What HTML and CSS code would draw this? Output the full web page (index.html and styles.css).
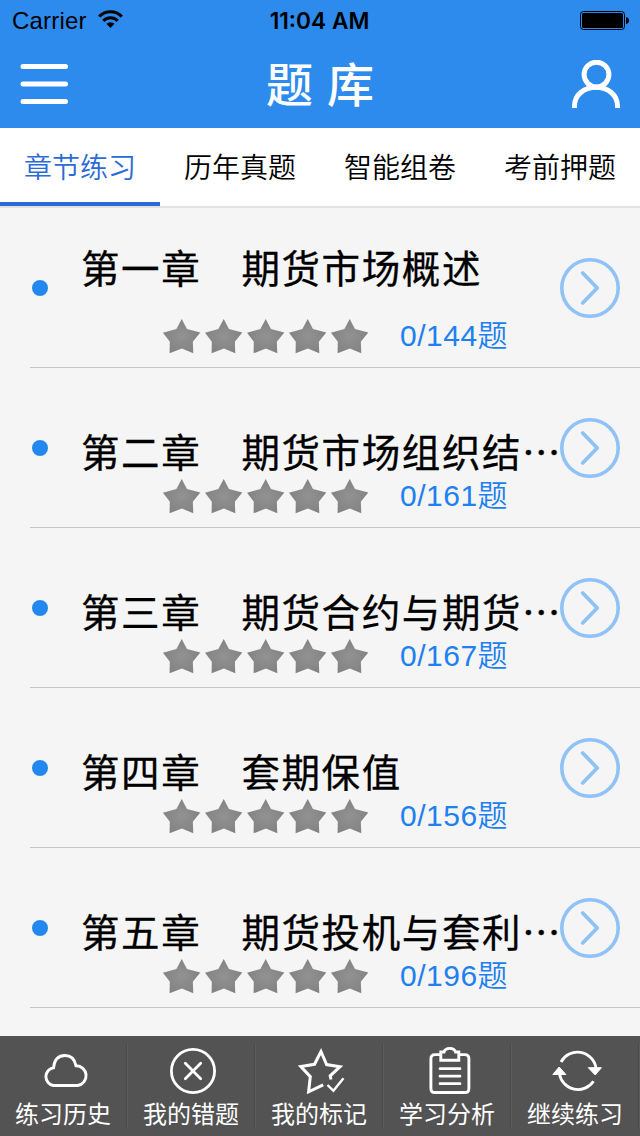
FILE: index.html
```html
<!DOCTYPE html>
<html lang="zh-CN">
<head>
<meta charset="utf-8">
<title>题库</title>
<link rel="stylesheet" href="styles.css">
</head>
<body>
<svg class="defs" width="0" height="0">
  <defs>
    <radialGradient id="grey"><stop offset="0" stop-color="#929292"/><stop offset="1" stop-color="#838383"/></radialGradient>
    <path id="star" d="M18.7 0L24 10L37.3 13.5L29.8 22.7L30.3 34.3L18.9 29.4L6.6 34.3L6.8 22.7L0 13.8L13.4 10Z"/>
    <g id="stars" fill="url(#grey)">
      <use href="#star" x="0"/><use href="#star" x="42"/><use href="#star" x="84"/><use href="#star" x="126"/><use href="#star" x="168"/>
    </g>
    <g id="go" fill="none" stroke="#8fc2f6">
      <circle cx="30" cy="30" r="28.2" stroke-width="3.6"/>
      <path d="M22.7 15L37.2 30L22.7 45" stroke-width="3.8" stroke-linecap="round" stroke-linejoin="round"/>
    </g>
  </defs>
</svg>
<div class="app">
  <header class="top">
    <div class="status">
      <div class="carrier"><span>Carrier</span>
        <svg width="25" height="19" viewBox="0 0 26 20" fill="none" stroke="#000" stroke-width="3.2">
          <path d="M1.1 7A16.5 16.5 0 0 1 24.9 7"/><path d="M5.4 11.4A10.7 10.7 0 0 1 20.6 11.4"/>
          <path d="M13 19L8.7 14.6A6.2 6.2 0 0 1 17.3 14.6Z" fill="#000" stroke="none"/>
        </svg>
      </div>
      <div class="clock">11:04 AM</div>
      <svg class="battery" width="50" height="20" viewBox="0 0 50 20">
        <rect x=".5" y=".5" width="44" height="18" rx="3" fill="none" stroke="#000"/>
        <rect x="2" y="2" width="41" height="15" rx="1.5"/><path d="M46 6Q49 6.5 49 9.5T46 13Z"/>
      </svg>
    </div>
    <div class="nav">
      <svg width="48" height="48" viewBox="0 0 48 48" stroke="#fff" stroke-width="5" stroke-linecap="round"><path d="M3 6.5H45.5M3 24H45.5M3 41.5H45.5"/></svg>
      <h1>题 库</h1>
      <svg width="48" height="48" viewBox="0 0 48 48" fill="none" stroke="#fff" stroke-width="5"><circle cx="24.5" cy="14.6" r="12.4"/><path d="M2.5 48V46C2.5 35 12 27.3 24 27.3S45.5 35 45.5 46V48"/></svg>
    </div>
  </header>
  <nav class="tabs">
    <a class="tab active">章节练习</a><a class="tab">历年真题</a><a class="tab">智能组卷</a><a class="tab">考前押题</a>
  </nav>
  <ul class="list">
    <li class="row first"><i class="dot"></i><div class="body"><div class="title">第一章　期货市场概述</div><div class="meta"><svg width="206" height="35"><use href="#stars"/></svg><span>0/144题</span></div></div><svg class="go" width="60" height="60"><use href="#go"/></svg></li>
    <li class="row"><i class="dot"></i><div class="body"><div class="title">第二章　期货市场组织结…</div><div class="meta"><svg width="206" height="35"><use href="#stars"/></svg><span>0/161题</span></div></div><svg class="go" width="60" height="60"><use href="#go"/></svg></li>
    <li class="row"><i class="dot"></i><div class="body"><div class="title">第三章　期货合约与期货…</div><div class="meta"><svg width="206" height="35"><use href="#stars"/></svg><span>0/167题</span></div></div><svg class="go" width="60" height="60"><use href="#go"/></svg></li>
    <li class="row"><i class="dot"></i><div class="body"><div class="title">第四章　套期保值</div><div class="meta"><svg width="206" height="35"><use href="#stars"/></svg><span>0/156题</span></div></div><svg class="go" width="60" height="60"><use href="#go"/></svg></li>
    <li class="row"><i class="dot"></i><div class="body"><div class="title">第五章　期货投机与套利…</div><div class="meta"><svg width="206" height="35"><use href="#stars"/></svg><span>0/196题</span></div></div><svg class="go" width="60" height="60"><use href="#go"/></svg></li>
  </ul>
  <footer class="bar">
    <a class="item"><svg width="52" height="50" viewBox="0 0 52 50"><path d="M14.5 39.5A9 9 0 0 1 14.6 21.7Q15.7 9.5 26 9.5Q35 9.5 37 19.8A9.9 9.9 0 0 1 38.6 39.5Z" stroke-width="2.9"/></svg><span>练习历史</span></a>
    <a class="item"><svg width="52" height="50" viewBox="0 0 52 50"><circle cx="26" cy="25" r="21.6" stroke-width="2.8"/><path d="M18.3 17.3L33.7 32.7M33.7 17.3L18.3 32.7" stroke-width="2.8" stroke-linecap="round"/></svg><span>我的错题</span></a>
    <a class="item"><svg width="52" height="50" viewBox="0 0 52 50"><path d="M36 33.5L35.2 29.8L45 20.7L31.6 18.6L26 5.5L19.5 18.3L5.8 20.6L15.3 30.6L13.6 45.8L28.2 38.8" stroke-width="3"/><path d="M32.5 39L38.4 44.8L48.5 32.2" stroke-width="2.4"/></svg><span>我的标记</span></a>
    <a class="item"><svg width="52" height="50" viewBox="0 0 52 50"><path d="M17 8.6H12Q7.9 8.6 7.9 12.7V42.4Q7.9 46.5 12 46.5H41.8Q45.9 46.5 45.9 42.4V12.7Q45.9 8.6 41.8 8.6H36.5" stroke-width="2.9"/><path d="M17.8 14.2V6H21Q22 2.4 26.8 2.4T32.5 6H35.8V14.2Z" stroke-width="2.9"/><path d="M17 22.7H37M17 30.2H37M17 37.7H37" stroke-width="2.7" stroke-linecap="round"/></svg><span>学习分析</span></a>
    <a class="item"><svg width="52" height="50" viewBox="0 0 52 50"><path d="M10 16A18.7 18.7 0 0 1 45 22M42.5 35.2A18.7 18.7 0 0 1 8.5 28" stroke-width="2.8"/><path d="M37.3 21.7H50.4L44.2 29ZM1.8 28.5H14.9L8.2 21Z" fill="#fff" stroke-width="1" stroke-linejoin="round"/></svg><span>继续练习</span></a>
  </footer>
</div>
</body>
</html>
```
FILE: styles.css
```css
* { box-sizing: border-box; }
body { margin: 0; font-family: "Liberation Sans", "Noto Sans CJK SC", sans-serif; color: #000; }
svg { display: block; flex: none; }
.defs { height: 0; overflow: hidden; }
.app { width: 640px; height: 1136px; display: flex; flex-direction: column; overflow: hidden; background: #f5f5f5; }
.top { height: 128px; flex: none; background: #2d8bed; }
.status { height: 40px; display: grid; grid-template-columns: 1fr auto 1fr; align-items: center; padding: 2px 10px 0 12px; font-size: 24px; line-height: 38px; }
.carrier { display: flex; align-items: center; gap: 11px; }
.carrier span { letter-spacing: .2px; }
.carrier svg { margin-top: -3px; }
.clock { font-family: Inter, "Liberation Sans", sans-serif; font-weight: 600; font-size: 22.7px; margin-right: 3px; }
.battery { justify-self: end; }
.nav { height: 88px; display: flex; justify-content: space-between; align-items: center; padding: 0 20px; }
.nav h1 { margin: 0; padding-top: 4px; color: #fff; font-size: 47px; line-height: 84px; font-weight: 500; word-spacing: 1px; }
.nav svg { margin-top: -1px; }
.tabs { height: 80px; flex: none; display: grid; grid-template-columns: repeat(4, 1fr); background: #fff; border-bottom: 2px solid #e2e2e2; }
.tab { text-align: center; font-size: 28px; line-height: 74px; padding-top: 4px; font-weight: 350; height: 78px; }
.tab.active { color: #2a6bd8; border-bottom: 4px solid #2a6bd8; }
.list { list-style: none; margin: 0; padding: 0; flex: 1; }
.row { height: 160px; margin-left: 30px; padding: 1px 20px 0 2px; border-bottom: 1px solid #c5c5c5; display: flex; align-items: center; }
.dot { width: 16px; height: 16px; border-radius: 50%; background: #2288f0; flex: none; }
.body { width: 479px; height: 158px; margin-left: 33px; padding-bottom: 13px; display: flex; flex-direction: column; justify-content: flex-end; flex: none; }
.title { font-family: "Noto Sans CJK SC", sans-serif; font-size: 38.5px; letter-spacing: 1.6px; line-height: 44px; height: 44px; margin-bottom: 7px; white-space: nowrap; -webkit-text-stroke: .3px #000; }
.first .title { margin-bottom: 31px; }
.meta { display: flex; align-items: center; height: 35px; padding-left: 82px; gap: 31px; font-size: 30px; line-height: 35px; color: #2080ef; }
.meta span { letter-spacing: .5px; font-weight: 350; margin-top: -2px; }
.bar { height: 100px; flex: none; display: grid; grid-template-columns: repeat(5, 128px); background: #535353; color: #fff; }
.item { width: 128px; display: flex; flex-direction: column; align-items: center; padding-top: 10px; padding-right: 2px; background: linear-gradient(90deg, #4b4b4b 50%, #5b5b5b 50%) 126px 8px / 2px 84px no-repeat; }
.item svg { fill: none; stroke: #fff; margin-left: 3px; }
.item span { font-size: 24px; line-height: 38px; }
```
